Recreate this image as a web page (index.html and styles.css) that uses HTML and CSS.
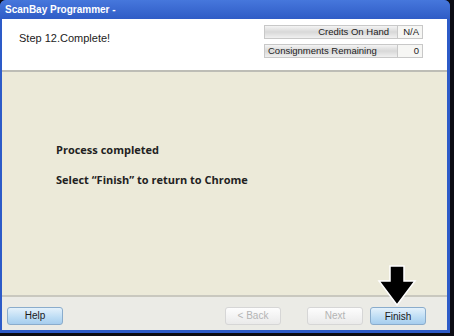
FILE: index.html
```html
<!DOCTYPE html>
<html lang="en">
<head>
    <meta charset="UTF-8">
    <title>ScanBay Programmer</title>
    <link rel="stylesheet" href="styles.css">
</head>
<body>
    <div class="window">
        <div class="titlebar">ScanBay Programmer -</div>
        <div class="header">
            <div class="step">Step 12.Complete!</div>
            <div class="stats">
                <div class="stat">
                    <span class="stat-label right">Credits On Hand</span>
                    <span class="stat-value">N/A</span>
                </div>
                <div class="stat">
                    <span class="stat-label">Consignments Remaining</span>
                    <span class="stat-value">0</span>
                </div>
            </div>
        </div>
        <div class="content">
            <p>Process completed</p>
            <p>Select “Finish” to return to Chrome</p>
        </div>
        <div class="buttons">
            <button class="btn">Help</button>
            <div class="spacer"></div>
            <button class="btn disabled">&lt; Back</button>
            <button class="btn disabled">Next</button>
            <div class="finish-wrap">
                <svg class="arrow" width="40" height="42" viewBox="0 0 40 42">
                    <polygon points="13,1 27,1 27,16 38,16 20,40 2,16 13,16" fill="#000" stroke="#fff" stroke-width="1.5"/>
                </svg>
                <button class="btn primary">Finish</button>
            </div>
        </div>
    </div>
</body>
</html>
```

FILE: styles.css
```css
* {
    margin: 0;
    padding: 0;
    box-sizing: border-box;
}

body {
    width: 454px;
    height: 336px;
    background: #0c0c14;
    font-family: "Liberation Sans", Arial, sans-serif;
}

.window {
    width: 450px;
    height: 333px;
    background: #2d5bc8;
    border-radius: 6px 6px 0 0;
    padding: 0 3px 3px 2px;
    display: flex;
    flex-direction: column;
}

.titlebar {
    height: 19px;
    padding: 4px 0 0 5px;
    margin: 0 -3px 0 -2px;
    color: #fff;
    font-weight: bold;
    font-size: 10px;
    background: linear-gradient(#4677dc, #2f5cc6);
    border-radius: 6px 6px 0 0;
}

.header {
    height: 53px;
    background: #fff;
    display: flex;
    justify-content: space-between;
    border-bottom: 2px solid #bdbdb6;
}

.step {
    padding: 13px 0 0 17px;
    font-size: 11px;
    color: #222;
}

.stats {
    padding: 6px 24px 0 0;
    display: flex;
    flex-direction: column;
    gap: 5px;
}

.stat {
    display: flex;
    height: 14px;
    width: 159px;
    border: 1px solid #c8c8c8;
    font-size: 9.5px;
    color: #222;
}

.stat-label {
    flex: 1;
    padding: 0 3px;
    line-height: 12px;
    background: linear-gradient(#f4f4f4, #d8d8d8 50%, #f0f0f0);
    border-right: 1px solid #c8c8c8;
}

.stat-label.right {
    text-align: right;
    padding-right: 8px;
}

.stat-value {
    width: 24px;
    text-align: right;
    padding-right: 3px;
    line-height: 12px;
    background: #f6f6f4;
}

.content {
    flex: 1;
    background: #ecead9;
    padding: 70px 0 0 54px;
    font-family: "Open Sans", sans-serif;
    font-weight: bold;
    font-size: 11px;
    color: #222;
    border-bottom: 2px solid #c9c8bf;
}

.content p {
    margin-bottom: 15px;
}

.buttons {
    height: 33px;
    background: #ebebe6;
    display: flex;
    align-items: center;
    padding: 4px 0 0 5px;
}

.spacer {
    flex: 1;
}

.btn {
    width: 56px;
    height: 18px;
    border: 1px solid #8aaccc;
    border-radius: 3px;
    background: linear-gradient(#e4f1fb, #bcdcf4 60%, #a6cdee);
    font-family: "Liberation Sans", Arial, sans-serif;
    font-size: 10px;
    color: #1a1a1a;
    margin-right: 26px;
}

.btn.disabled {
    color: #b4b4b4;
    border-color: #d6d6d6;
    background: linear-gradient(#fdfdfd, #eaeaea);
}

.btn.disabled + .btn.disabled {
    margin-right: 7px;
}

.finish-wrap {
    position: relative;
    margin-right: 21px;
}

.finish-wrap .btn {
    margin-right: 0;
}

.arrow {
    position: absolute;
    left: 7px;
    top: -41px;
}
```
